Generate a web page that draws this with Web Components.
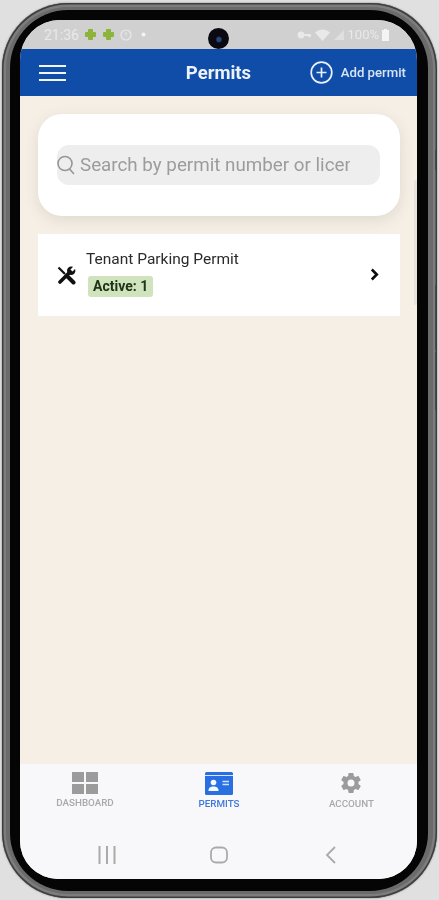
<!DOCTYPE html>
<html lang="en">
  <head>
    <meta charset="UTF-8" />
    <title>Permits</title>
    <style>
      html, body { margin: 0; height: 100%; }
      body {
        background: #e0e0e0;
        font-family: Roboto, "Liberation Sans", sans-serif;
        overflow: hidden;
      }
    </style>
  </head>
  <body>
    <phone-frame>
      <status-bar></status-bar>
      <app-header title-text="Permits" action="Add permit"></app-header>
      <permit-page>
        <search-card placeholder="Search by permit number or license plate"></search-card>
        <permit-row name="Tenant Parking Permit" badge="Active: 1"></permit-row>
      </permit-page>
      <bottom-nav></bottom-nav>
      <system-nav></system-nav>
    </phone-frame>

    <script>
      const define = (name, html) =>
        customElements.define(
          name,
          class extends HTMLElement {
            constructor() {
              super();
              const shadow = this.attachShadow({ mode: "open" });
              shadow.innerHTML = typeof html === "function" ? html(this) : html;
            }
          }
        );

      define("phone-frame", `
        <style>
          :host {
            display: block;
            position: relative;
            box-sizing: border-box;
            width: 435px;
            height: 895px;
            margin: 3px 0 0 2px;
            padding: 7px 9px 7px 8px;
            border-radius: 66px;
            background: #6b6b6b;
            box-shadow: inset 0 0 0 1.500px #3e3e3e, inset 0 0 0 4px #7d7d7d, 0 0 2px #777;
          }
          .black {
            height: 100%;
            box-sizing: border-box;
            padding: 10px 11px 12px 10px;
            border-radius: 58px;
            background: #050505;
          }
          .screen {
            position: relative;
            display: flex;
            flex-direction: column;
            height: 100%;
            border-radius: 40px 40px 38px 38px;
            overflow: hidden;
            background: #f8f8fa;
            filter: blur(0.7px);
          }
          .camera {
            position: absolute;
            top: 8px;
            left: 188px;
            width: 21px;
            height: 21px;
            border-radius: 50%;
            background: radial-gradient(circle at 52% 55%, #27457f 0 2px, #0a0a10 3.5px);
          }
          .btn {
            position: absolute;
            right: 1px;
            width: 1.500px;
            background: #4a4a4a;
          }
        </style>
        <div class="black">
          <div class="screen">
            <slot></slot>
            <div class="camera"></div>
          </div>
        </div>
        <div class="btn" style="top: 147px; height: 20px"></div>
        <div class="btn" style="top: 282px; height: 65px"></div>
        <div class="btn" style="top: 349px; height: 58px"></div>
      `);

      define("status-bar", `
        <style>
          :host {
            display: flex;
            align-items: center;
            flex: none;
            height: 29px;
            padding: 0 28px 0 24px;
            box-sizing: border-box;
            background: #d0d0d0;
            color: #e9e9e9;
            font-size: 13px;
          }
          .left, .right { display: flex; align-items: center; }
          .left { gap: 5px; }
          .left span { font-size: 14px; }
          .right { margin-left: auto; gap: 4px; }
          svg { display: block; }
        </style>
        <div class="left">
          <span>21:36</span>
          <svg width="13" height="13" viewBox="0 0 13 13"><path fill="#8cb43a" stroke="#8cb43a" stroke-linejoin="round" d="M4.500 1.500h4v3h3v4h-3v3h-4v-3h-3v-4h3z"/></svg>
          <svg width="13" height="13" viewBox="0 0 13 13"><path fill="#8cb43a" stroke="#8cb43a" stroke-linejoin="round" d="M4.500 1.500h4v3h3v4h-3v3h-4v-3h-3v-4h3z"/></svg>
          <svg width="12" height="12" viewBox="0 0 12 12"><circle cx="6" cy="6" r="5" fill="none" stroke="#e9e9e9" stroke-width="1.2"/><path d="M6 3v3.4" stroke="#e9e9e9"/></svg>
          <svg width="5" height="5" viewBox="0 0 5 5" style="margin-left:4.500px"><circle cx="2.5" cy="2.5" r="2" fill="#f4f4f4"/></svg>
        </div>
        <div class="right">
          <svg width="14" height="10" viewBox="0 0 14 10"><circle cx="4" cy="5" r="3.4" fill="#e9e9e9"/><path d="M6 4h8v3h-3v-1H6z" fill="#e9e9e9"/></svg>
          <svg width="15" height="12" viewBox="0 0 15 12"><path d="M0 3.5a11 11 0 0 1 15 0L7.500 12z" fill="#e9e9e9"/></svg>
          <svg width="10" height="10" viewBox="0 0 10 10"><path d="M10 0v10H0z" fill="#e0e0e0"/></svg>
          <span>100%</span>
          <svg width="7" height="12" viewBox="0 0 7 12" style="margin-left:-1px"><path d="M2 0h3v1h2v11H0V1h2z" fill="#f4f4f4"/></svg>
        </div>
      `);

      define("app-header", (el) => `
        <style>
          :host {
            display: grid;
            grid-template-columns: 1fr auto 1fr;
            align-items: center;
            flex: none;
            height: 47px;
            padding: 0 11px 0 19px;
            box-sizing: border-box;
            background: #0f4da8;
            color: #fff;
          }
          .menu { display: block; }
          h1 {
            margin: 0;
            font-size: 18.500px;
            font-weight: 700;
            color: #eef3fb;
            position: relative;
            left: -4px;
          }
          .action {
            justify-self: end;
            display: flex;
            align-items: center;
            gap: 8px;
            font-size: 13.200px;
            font-weight: 500;
            color: #d9e4f5;
          }
          .action svg { display: block; }
        </style>
        <svg class="menu" width="27" height="18" viewBox="0 0 27 18">
          <path d="M0 2h27M0 9h27M0 16h27" stroke="#f2f6fc" stroke-width="2"/>
        </svg>
        <h1>${el.getAttribute("title-text")}</h1>
        <div class="action">
          <svg width="23" height="23" viewBox="0 0 23 23" fill="none" stroke="#eaf0fa" stroke-width="1.7">
            <circle cx="11.500" cy="11.500" r="10.300"/>
            <path d="M11.500 6.500v10M6.500 11.500h10"/>
          </svg>
          <span>${el.getAttribute("action")}</span>
        </div>
      `);

      define("permit-page", `
        <style>
          :host {
            display: flex;
            flex-direction: column;
            flex: 1;
            gap: 18px;
            padding: 18px 17px 0 18px;
            background: #f5efe6;
            position: relative;
          }
          .scroll {
            position: absolute;
            top: 84px;
            right: 0;
            width: 3px;
            height: 125px;
            background: #e6e3de;
            border-radius: 2px;
          }
        </style>
        <slot></slot>
        <div class="scroll"></div>
      `);

      define("search-card", (el) => `
        <style>
          :host {
            display: flex;
            align-items: center;
            height: 102px;
            padding: 0 20px 0 19px;
            box-sizing: border-box;
            background: #fff;
            border-radius: 24px;
            box-shadow: 0 4px 14px rgba(120, 105, 80, 0.16);
          }
          .field {
            display: flex;
            align-items: center;
            flex: 1;
            min-width: 0;
            height: 40px;
            padding-right: 30px;
            border-radius: 12px;
            background: #eeeeee;
            color: #9c9c9c;
            font-size: 18.800px;
          }
          svg { flex: none; display: block; margin-right: 5px; }
          span { white-space: nowrap; overflow: hidden; }
        </style>
        <div class="field">
          <svg width="18" height="20" viewBox="0 0 18 20" fill="none" stroke="#969696" stroke-width="1.600">
            <circle cx="8" cy="8.500" r="7"/>
            <path d="M12.500 14l4.500 5"/>
          </svg>
          <span>${el.getAttribute("placeholder")}</span>
        </div>
      `);

      define("permit-row", (el) => `
        <style>
          :host {
            display: flex;
            align-items: center;
            height: 82px;
            padding: 0 21px 0 19px;
            box-sizing: border-box;
            background: #fff;
            color: #222;
          }
          .tool { flex: none; display: block; margin-right: 10px; }
          .text { flex: 1; display: flex; flex-direction: column; align-items: flex-start; gap: 8px; margin-top: -2px; }
          .name { font-size: 15.500px; line-height: 17px; color: #2b2b2b; }
          .badge {
            margin-left: 2px;
            padding: 0 5px;
            height: 21px;
            line-height: 21px;
            border-radius: 3px;
            background: #cfe4bd;
            color: #203318;
            font-size: 14px;
            font-weight: 700;
          }
          .chev { flex: none; display: block; margin-top: -2px; }
        </style>
        <svg class="tool" width="19" height="19" viewBox="0 0 19 19" fill="none" stroke="#111">
          <path d="M1.500 1.500L8 8" stroke-width="2.200"/>
          <path d="M10 10l6.500 6.500" stroke-width="4" stroke-linecap="round"/>
          <path d="M3 16L13 6" stroke-width="3.600" stroke-linecap="round"/>
          <circle cx="14.200" cy="4.800" r="4.200" fill="#111" stroke="none"/>
          <path d="M14.500 4.500L19 0" stroke="#fff" stroke-width="3"/>
        </svg>
        <div class="text">
          <div class="name">${el.getAttribute("name")}</div>
          <div class="badge">${el.getAttribute("badge")}</div>
        </div>
        <svg class="chev" width="9" height="13" viewBox="0 0 9 13" fill="none">
          <path d="M1.800 1.500l5 5-5 5" stroke="#0c0c0c" stroke-width="2.600"/>
        </svg>
      `);

      define("nav-item", (el) => `
        <style>
          :host {
            display: flex;
            flex-direction: column;
            align-items: center;
            gap: 3px;
            font-size: 9.800px;
            font-weight: 500;
            color: var(--c, #a9a9ab);
          }
          ::slotted(svg) { display: block; }
        </style>
        <slot></slot>
        <span>${el.getAttribute("label")}</span>
      `);

      define("bottom-nav", `
        <style>
          :host {
            display: grid;
            grid-template-columns: 130px 138px 1fr;
            flex: none;
            height: 66px;
            padding: 8px 0 0 0;
            box-sizing: border-box;
            background: #f8f8fa;
            justify-items: center;
          }
          svg { display: block; }
          nav-item:last-child { margin-right: 2px; }
        </style>
        <nav-item label="DASHBOARD">
          <svg width="26" height="22" viewBox="0 0 26 22" fill="#9b9b9b">
            <rect x="0" y="0" width="12" height="10"/><rect x="14" y="0" width="12" height="10"/>
            <rect x="0" y="12" width="12" height="10"/><rect x="14" y="12" width="12" height="10"/>
          </svg>
        </nav-item>
        <nav-item label="PERMITS" style="--c: #3f78dc">
          <svg width="28" height="23" viewBox="0 0 28 23">
            <rect width="28" height="23" rx="1.500" fill="#2a6fe2"/>
            <path d="M0 3.500h28" stroke="#d9e6fb" stroke-width="1"/>
            <circle cx="8.500" cy="10.500" r="2.800" fill="#f4f8ff"/>
            <path d="M3.500 19c0-3.500 2-4.500 5-4.500s5 1 5 4.500z" fill="#f4f8ff"/>
            <path d="M17.500 9.500h6.500M17.500 12.500h6.500" stroke="#cfe0fb" stroke-width="1.500"/>
          </svg>
        </nav-item>
        <nav-item label="ACCOUNT">
          <svg width="24" height="24" viewBox="0 0 24 24" fill="#9b9b9b" style="margin-top:-1px">
            <path fill-rule="evenodd" d="M19.400 13c.04-.32.1-.66.1-1s-.06-.68-.1-1l2.100-1.650c.2-.15.25-.42.12-.64l-2-3.460c-.12-.22-.39-.3-.61-.22l-2.500 1c-.52-.4-1.080-.73-1.690-.98l-.38-2.650A.49.49 0 0 0 14 2h-4c-.25 0-.46.18-.49.42l-.38 2.650c-.61.25-1.170.59-1.690.98l-2.500-1c-.23-.09-.49 0-.61.22l-2 3.460c-.13.22-.07.49.12.64L4.570 11c-.04.32-.07.65-.07 1s.03.68.07 1l-2.110 1.650c-.19.15-.24.42-.12.64l2 3.460c.12.22.39.3.61.22l2.500-1c.52.4 1.080.73 1.690.98l.38 2.650c.03.24.24.42.49.42h4c.25 0 .46-.18.49-.42l.38-2.650c.61-.25 1.170-.59 1.690-.98l2.500 1c.23.09.49 0 .61-.22l2-3.460c.12-.22.07-.49-.12-.64zM12 15.500a3.500 3.500 0 1 1 0-7 3.500 3.500 0 0 1 0 7z"/>
          </svg>
        </nav-item>
      `);

      define("system-nav", `
        <style>
          :host {
            display: grid;
            grid-template-columns: 174px 50px 1fr;
            align-items: center;
            flex: none;
            height: 49px;
            background: #f8f8fa;
            justify-items: center;
          }
          svg { display: block; }
        </style>
        <svg width="18" height="18" viewBox="0 0 18 18" stroke="#aaa" stroke-width="2" fill="none">
          <path d="M1.500 0v18M9 0v18M16.500 0v18"/>
        </svg>
        <svg width="18" height="18" viewBox="0 0 18 18" stroke="#aaa" stroke-width="1.800" fill="none">
          <rect x="1" y="1.500" width="16" height="15" rx="5"/>
        </svg>
        <svg width="11" height="18" viewBox="0 0 11 18" stroke="#aaa" stroke-width="1.800" fill="none">
          <path d="M10 1L2 9l8 8"/>
        </svg>
      `);
    </script>
  </body>
</html>
